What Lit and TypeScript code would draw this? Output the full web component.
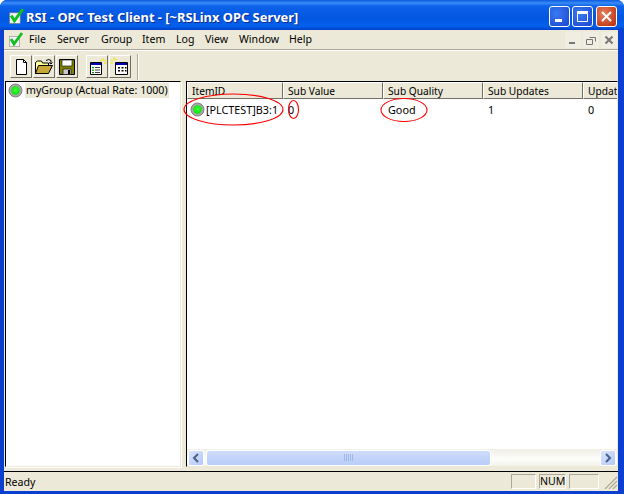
import { LitElement, html, css, svg } from "lit";
import { customElement } from "lit/decorators.js";

const led = (x = 0) => html`<svg class="led" width="15" height="15" viewBox="0 0 15 15">
  <defs><radialGradient id="g${x}" cx="50%" cy="45%" r="60%"><stop offset="0" stop-color="#40ff40"/><stop offset="1" stop-color="#00e000"/></radialGradient></defs>
  <circle cx="7.5" cy="7.5" r="6.5" fill="#a8a8a8" stroke="#808080"/><circle cx="7.5" cy="7.5" r="4.2" fill="url(#g${x})"/></svg>`;

const check = (sz: number) => html`<svg width=${sz} height=${sz} viewBox="0 0 16 16">
  <rect x="1.5" y="4.5" width="10" height="10" fill="#f4f4f4" stroke="#777" stroke-dasharray="1 1"/>
  <path d="M3 7l3 5 8-11" fill="none" stroke="#10c020" stroke-width="2.8"/></svg>`;

const icons = {
  newf: svg`<path d="M5.5 2.5h7l3 3v12h-10z" fill="#fff" stroke="#000"/><path d="M12.5 2.5v3h3" fill="none" stroke="#000"/>`,
  open: svg`<path d="M1.5 16.5v-11l2-1.500h4l1 2h6v2" fill="#ffff99" stroke="#000"/><path d="M1.500 16.500l3-8h14l-4 8z" fill="#c8a838" stroke="#000"/><path d="M12 3.500q3-2 5 0v3m-2-1l2 1.500 1.500-1.500" fill="none" stroke="#000"/>`,
  save: svg`<path d="M2.500 2.500h15v15h-15z" fill="#808000" stroke="#000"/><path d="M5 3h10v6h-10z" fill="#fff" stroke="#000" stroke-width=".6"/><path d="M6 12h8v5.500h-8z" fill="#c8c8c8" stroke="#000" stroke-width=".6"/><path d="M11 13h2v4h-2z" fill="#000"/>`,
  list: svg`<path d="M3.500 5.500h11v12h-11z" fill="#fff" stroke="#000"/><path d="M4 6h10v2h-10z" fill="#0000b0"/><path d="M5 10h2v1.300h-2zM5 12.500h2v1.300h-2zM5 15h2v1.300h-2z" fill="#00a000"/><path d="M8 10.500h5M8 13h5M8 15.500h5" stroke="#444"/><path d="M16 1v3M13 3l2 1M19 3l-2 1M17 6h3" stroke="#f4e400"/>`,
  grid: svg`<path d="M5.500 5.500h12v12h-12z" fill="#fff" stroke="#000"/><path d="M6 6h11v2h-11z" fill="#0000b0"/><path d="M8 10h2v1.500h-2zM11.500 10h2v1.500h-2zM15 10h1.500v1.500h-1.500zM8 13h2v1.500h-2zM11.500 13h2v1.500h-2zM15 13h1.500v1.500h-1.500z" fill="#000"/><path d="M4 0v3M1 3l2 1M7 2l-2 1M0 6h3" stroke="#f4e400"/>`,
};

const tool = (p: unknown) => html`<div class="tb"><svg width="20" height="20" viewBox="0 0 20 20">${p}</svg></div>`;

const menus: [string, number][] = [["File", 28], ["Server", 44], ["Group", 41], ["Item", 34], ["Log", 29], ["View", 34], ["Window", 50], ["Help", 40]];

@customElement("app-root")
export class AppRoot extends LitElement {
  static styles = css`
    :host { display: block; width: 624px; height: 494px; position: relative; overflow: hidden; background: #fff;
      font-family: "Noto Sans", sans-serif; font-size: 10.6px; color: #000; }
    .win { width: 624px; height: 494px; display: flex; flex-direction: column; background: #0a3fd0; border-radius: 7px 7px 0 0; }
    .title { height: 30px; flex: none; display: flex; align-items: center; padding: 2px 7px 0 8px; box-sizing: border-box; gap: 1px; border-radius: 7px 7px 0 0;
      background: linear-gradient(180deg, #0a5ae0 0, #3a8cf6 3px, #0d62ea 6px, #0256e0 18px, #0260ec 26px, #0040c8 30px); }
    .ttext { flex: 1; color: #fff; font: bold 12.9px "Noto Sans", sans-serif; text-shadow: 1px 1px #0f2f90; white-space: nowrap; margin-top: 2px; }
    .caps { display: flex; gap: 2px; }
    .cap { width: 21px; height: 21px; box-sizing: border-box; border: 1px solid #fff; border-radius: 3px; display: flex; align-items: center; justify-content: center;
      background: radial-gradient(circle at 35% 35%, #3a7af0, #2050d8 80%); }
    .cap.x { background: radial-gradient(circle at 35% 35%, #e88060, #c03a18 80%); margin-left: 1px; }
    .body { flex: 1; min-height: 0; margin: 0 6px 3px 4px; background: #ece9d8; display: flex; flex-direction: column; }
    .menu { height: 20px; flex: none; display: flex; align-items: center; border-bottom: 1px solid #aca899; box-shadow: 0 1px #fff; box-sizing: border-box; }
    .micon { width: 25px; padding-left: 4px; box-sizing: border-box; display: flex; }
    .mi { flex: none; line-height: 18px; margin-top: -2px; }
    .items { flex: 1; display: flex; }
    .mdi { display: flex; gap: 2px; padding-right: 1px; }
    .mb { width: 16px; height: 16px; display: flex; align-items: center; justify-content: center; background: #f0eee2; }
    .toolbar { height: 29px; flex: none; margin-top: 2px; display: flex; align-items: center; box-sizing: border-box; padding: 0 0 0 6px; }
    .tb { width: 22px; height: 23px; flex: none; box-sizing: border-box; display: flex; align-items: center; justify-content: center; margin-right: 1px;
      border: 1px solid; border-color: #fff #716f64 #716f64 #fff; }
    .tsep { width: 7px; }
    .grip { width: 0; height: 26px; margin-left: 5px; border-left: 1px solid #aca899; border-right: 1px solid #fff; }
    .panes { flex: 1; min-height: 0; display: flex; gap: 5px; padding-left: 1px; }
    .left { width: 176px; flex: none; background: #fff; box-sizing: border-box; border: 1px solid; border-color: #000 #ece9d8 #ece9d8 #000; box-shadow: 1px 1px #fff; display: flex; flex-direction: column; }
    .node { display: flex; align-items: center; gap: 2px; padding: 1px 0 0 2px; }
    .node span { background: #ece9d8; padding: 0 1px; line-height: 15px; white-space: nowrap; }
    .right { flex: 1; min-width: 0; background: #fff; box-sizing: border-box; border: 1px solid; border-color: #000 #ece9d8 #ece9d8 #000; display: flex; flex-direction: column; }
    .head { display: flex; height: 17px; flex: none; overflow: hidden; }
    .h { flex: none; box-sizing: border-box; padding-left: 4px; line-height: 16px; font-size: 10.2px; white-space: nowrap; border: 1px solid; border-color: #fff #716f64 #716f64 #fff; background: #ece9d8; }
    .row { display: flex; height: 21px; flex: none; align-items: center; overflow: hidden; font-size: 10.8px; }
    .c { flex: none; box-sizing: border-box; padding-left: 5px; white-space: nowrap; }
    .c.first { display: flex; align-items: center; gap: 1px; padding-left: 3px; }
    .fill { flex: 1; }
    .sb { height: 17px; flex: none; display: flex; align-items: center; gap: 2px; padding: 0 1px; background: linear-gradient(180deg, #f0efe6, #fdfdfb 60%, #f3f2ea); }
    .sbtn { width: 16px; height: 16px; flex: none; box-sizing: border-box; border: 1px solid #fff; border-radius: 2px; background: linear-gradient(135deg, #dbe6fd, #b2c8f8); display: flex; align-items: center; justify-content: center; }
    .thumb { width: 285px; height: 16px; flex: none; box-sizing: border-box; border: 1px solid #fff; border-radius: 3px; background: linear-gradient(180deg, #cfdcfb, #b8cdf9); display: flex; align-items: center; justify-content: center; }
    .track { flex: 1; }
    .status { height: 19px; margin-top: 4px; flex: none; border-top: 1px solid #000; display: flex; align-items: center; padding-left: 1px; }
    .ready { flex: 1; }
    .sp { height: 15px; box-sizing: border-box; border: 1px solid; border-color: #aca899 #fff #fff #aca899; margin-right: 3px; text-align: center; line-height: 13px; }
    .notes { position: absolute; left: 0; top: 0; pointer-events: none; }
  `;

  render() {
    const cols: [string, number][] = [["ItemID", 96], ["Sub Value", 100], ["Sub Quality", 100], ["Sub Updates", 100], ["Updates", 60]];
    return html`
      <div class="win">
        <div class="title">
          ${check(17)}
          <div class="ttext">RSI - OPC Test Client - [~RSLinx OPC Server]</div>
          <div class="caps">
            <div class="cap"><svg width="13" height="13"><rect x="2" y="9" width="7" height="3" fill="#fff"/></svg></div>
            <div class="cap"><svg width="13" height="13"><path d="M1.500 3.500h10v8h-10z" fill="none" stroke="#fff"/><rect x="1" y="1" width="11" height="2" fill="#fff"/></svg></div>
            <div class="cap x"><svg width="13" height="13"><path d="M2 2l9 9M11 2l-9 9" stroke="#fff" stroke-width="2"/></svg></div>
          </div>
        </div>
        <div class="body">
          <div class="menu">
            <div class="micon">${check(16)}</div>
            <div class="items">${menus.map(([m, w]) => html`<span class="mi" style="width:${w}px">${m}</span>`)}</div>
            <div class="mdi">
              <div class="mb"><svg width="10" height="10"><rect x="1" y="7" width="6" height="2" fill="#777"/></svg></div>
              <div class="mb"><svg width="10" height="10"><path d="M3.500 2.500h6v4M.5 4.500h6v5h-6z" fill="none" stroke="#777"/></svg></div>
              <div class="mb"><svg width="10" height="10"><path d="M1.500 1.500l7 7M8.500 1.500l-7 7" stroke="#777" stroke-width="2"/></svg></div>
            </div>
          </div>
          <div class="toolbar">
            ${tool(icons.newf)}${tool(icons.open)}${tool(icons.save)}
            <div class="tsep"></div>
            ${tool(icons.list)}${tool(icons.grid)}
            <div class="grip"></div>
          </div>
          <div class="panes">
            <div class="left">
              <div class="node">${led(1)}<span>myGroup (Actual Rate: 1000)</span></div>
            </div>
            <div class="right">
              <div class="head">${cols.map(([t, w]) => html`<div class="h" style="width:${w}px">${t}</div>`)}</div>
              <div class="row">
                <div class="c first" style="width:96px">${led(2)}<span>[PLCTEST]B3:1</span></div>
                <div class="c" style="width:100px">0</div>
                <div class="c" style="width:100px">Good</div>
                <div class="c" style="width:100px">1</div>
                <div class="c" style="width:60px">0</div>
              </div>
              <div class="fill"></div>
              <div class="sb">
                <div class="sbtn"><svg width="8" height="10"><path d="M6 1L2 5l4 4" fill="none" stroke="#4d6185" stroke-width="2"/></svg></div>
                <div class="thumb"><svg width="9" height="7"><path d="M.5 0v7M2.500 0v7M4.500 0v7M6.500 0v7M8.500 0v7" stroke="#a0b8e8"/></svg></div>
                <div class="track"></div>
                <div class="sbtn"><svg width="8" height="10"><path d="M2 1l4 4-4 4" fill="none" stroke="#4d6185" stroke-width="2"/></svg></div>
              </div>
            </div>
          </div>
          <div class="status">
            <span class="ready">Ready</span>
            <div class="sp" style="width:25px"></div>
            <div class="sp" style="width:27px">NUM</div>
            <div class="sp" style="width:30px"></div>
            <svg width="16" height="15" viewBox="0 0 16 15"><path d="M3 15L15 3M7 15l8-8M11 15l4-4" stroke="#aca899" stroke-width="1.200"/></svg>
          </div>
        </div>
      </div>
      <svg class="notes" width="624" height="494" fill="none" stroke="#f00" stroke-width="1.100">
        <ellipse cx="233.500" cy="109.500" rx="49.500" ry="15.500"/>
        <ellipse cx="293.500" cy="109.500" rx="5" ry="9"/>
        <ellipse cx="404" cy="110" rx="23" ry="11.500"/>
      </svg>`;
  }
}
